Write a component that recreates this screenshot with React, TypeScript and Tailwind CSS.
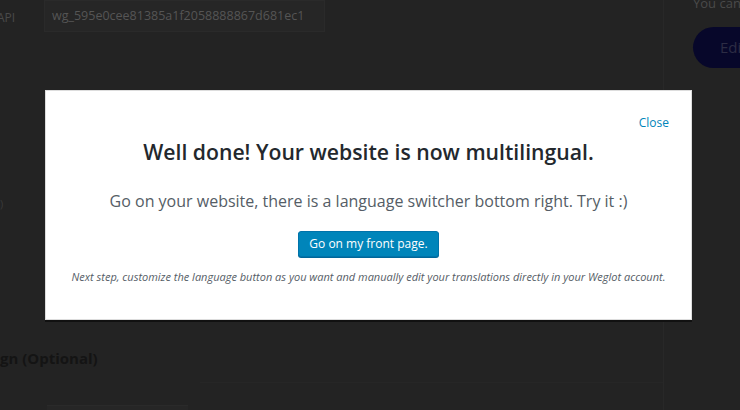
import React from 'react';

const App = () => {
  return (
    <div className="relative w-[740px] h-[410px] overflow-hidden bg-[#232323] font-['Open_Sans',sans-serif]">
      {/* Admin page behind the overlay */}
      <div className="flex h-full">
        <div className="flex-1 flex flex-col">
          <div className="flex items-start">
            <span className="w-[47px] -ml-[3px] pt-[9px] text-[12px] text-[#4a4a4a]">API</span>
            <div className="w-[281px] h-[32px] bg-[#262626] border border-[#2a2a2a] flex items-center px-[7px] text-[12.5px] text-[#555555]">
              wg_595e0cee81385a1f2058888867d681ec1
            </div>
          </div>
          <div className="mt-[166px] text-[11px] text-[#3a3a3a] leading-none">)</div>
          <div className="mt-[139px] text-[15px] font-bold text-[#141414] leading-[20px]">gn (Optional)</div>
          <div className="mt-[37px] flex items-start">
            <div className="ml-[47px] w-[141px] h-[10px] bg-[#262626] border-t border-[#2a2a2a]"></div>
            <div className="flex-1 -mt-[23px] ml-[12px] border-t border-[#262626]"></div>
          </div>
        </div>
        <div className="w-[77px] border-l border-[#282828] pl-[29px] flex flex-col">
          <span className="-mt-[6px] text-[13px] text-[#4a4a4a] whitespace-nowrap">You can t</span>
          <div className="mt-[13px] w-[80px] h-[41px] rounded-full bg-[#07072a] flex items-center pl-[27px] text-[15px] text-[#2c2c44]">
            Edit
          </div>
        </div>
      </div>

      {/* Modal */}
      <div className="absolute left-[45px] top-[90px] w-[647px] h-[230px] bg-white border border-[#dddddd] shadow-[0_2px_0_#111111] flex flex-col items-center">
        <div className="self-end mr-[22px] mt-[26px] text-[12px] leading-[12px] text-[#0085ba]">Close</div>
        <h2 className="mt-[10px] text-[21.2px] leading-[26px] font-semibold text-[#23282d]">
          Well done! Your website is now multilingual.
        </h2>
        <p className="mt-[25px] text-[16px] leading-[22px] text-[#555d66]">
          Go on your website, there is a language switcher bottom right. Try it :)
        </p>
        <button className="mt-[19px] h-[26px] px-[10px] rounded-[3px] bg-[#0085ba] border border-[#0073aa] text-white text-[12px] leading-none shadow-[0_1px_0_#006799]">
          Go on my front page.
        </button>
        <p className="mt-[12px] text-[11px] leading-[16px] italic text-[#555d66]">
          Next step, customize the language button as you want and manually edit your translations directly in your Weglot account.
        </p>
      </div>
    </div>
  );
};

export default App;
